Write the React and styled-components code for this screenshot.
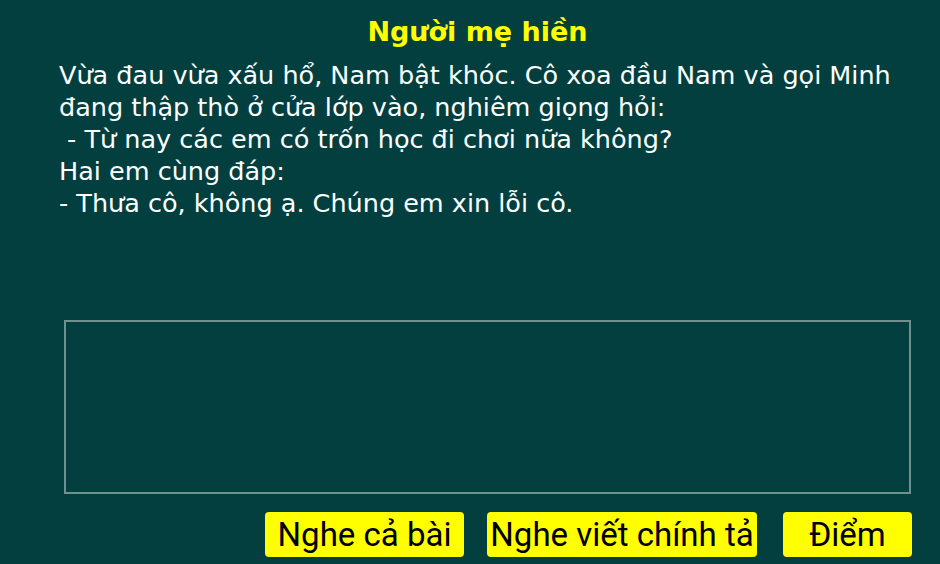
import React from "react";
import styled, { createGlobalStyle } from "styled-components";

const Global = createGlobalStyle`
  html, body {
    margin: 0;
    padding: 0;
    background: #033f3f;
  }
  body {
    width: 940px;
    height: 564px;
    overflow: hidden;
  }
`;

const Page = styled.div`
  width: 940px;
  height: 564px;
  box-sizing: border-box;
  background: #033f3f;
  display: flex;
  flex-direction: column;
  padding: 13px 28px 0 59px;
`;

const Title = styled.h1`
  margin: 0;
  text-align: center;
  color: #ffff00;
  font-family: "DejaVu Sans", sans-serif;
  font-weight: 700;
  font-size: 27px;
  line-height: 38px;
  padding-right: 16px;
`;

const Story = styled.div`
  color: #ffffff;
  font-family: "DejaVu Sans", sans-serif;
  font-size: 25.5px;
  line-height: 32px;
  margin-top: 8px;
  white-space: pre-wrap;
`;

const Line = styled.div``;

const Answer = styled.textarea`
  display: block;
  margin: 101px 0 0 5px;
  width: 847px;
  height: 174px;
  box-sizing: border-box;
  background: transparent;
  border: 2px solid #6f9090;
  outline: none;
  resize: none;
  color: #ffffff;
`;

const Actions = styled.div`
  display: flex;
  justify-content: flex-end;
  margin-top: 18px;
`;

const Button = styled.button`
  height: 45px;
  width: ${(p) => p.$w}px;
  margin-left: ${(p) => p.$gap || 0}px;
  box-sizing: border-box;
  padding: 0;
  border: none;
  border-radius: 4px;
  background: #ffff00;
  color: #000000;
  font-family: "Roboto", sans-serif;
  font-size: 33px;
  line-height: 45px;
  cursor: pointer;
`;

export default function App() {
  return (
    <>
      <Global />
      <Page>
        <Title>Người mẹ hiền</Title>
        <Story>
          <Line>Vừa đau vừa xấu hổ, Nam bật khóc. Cô xoa đầu Nam và gọi Minh</Line>
          <Line>đang thập thò ở cửa lớp vào, nghiêm giọng hỏi:</Line>
          <Line> - Từ nay các em có trốn học đi chơi nữa không?</Line>
          <Line>Hai em cùng đáp:</Line>
          <Line>- Thưa cô, không ạ. Chúng em xin lỗi cô.</Line>
        </Story>
        <Answer />
        <Actions>
          <Button $w={199}>Nghe cả bài</Button>
          <Button $w={270} $gap={23}>Nghe viết chính tả</Button>
          <Button $w={129} $gap={26}>Điểm</Button>
        </Actions>
      </Page>
    </>
  );
}
